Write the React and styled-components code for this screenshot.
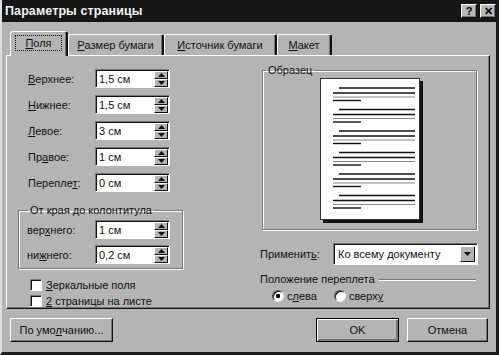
import React from 'react';
import styled, { createGlobalStyle } from 'styled-components';

const GlobalStyle = createGlobalStyle`
  html, body {
    margin: 0;
    padding: 0;
    background: #b4b4b4;
  }
  body {
    font-family: 'Liberation Sans', Arial, sans-serif;
    font-size: 11px;
    color: #111;
  }
`;

// underline one letter (keyboard accelerator)
const hot = (text, i) => (
  <>
    {text.slice(0, i)}
    <U>{text[i]}</U>
    {text.slice(i + 1)}
  </>
);

const tabs = [
  { label: 'Поля', key: 0, w: 58, active: true },
  { label: 'Размер бумаги', key: 0, w: 96 },
  { label: 'Источник бумаги', key: 0, w: 113 },
  { label: 'Макет', key: 0, w: 55 },
];

const margins = [
  { label: 'Верхнее:', key: 0, value: '1,5 см' },
  { label: 'Нижнее:', key: 0, value: '1,5 см' },
  { label: 'Левое:', key: 0, value: '3 см' },
  { label: 'Правое:', key: 2, value: '1 см' },
  { label: 'Переплет:', key: 7, value: '0 см' },
];

const headers = [
  { label: 'верхнего:', key: 3, value: '1 см' },
  { label: 'нижнего:', key: 2, value: '0,2 см' },
];

const pageGroups = [9, 30.5, 52, 73.5, 95, 116.5];

const SpinArrow = ({ down }) => (
  <svg width="7" height="4" viewBox="0 0 7 4">
    <path d={down ? 'M0 0H7L3.5 4Z' : 'M0 4H7L3.5 0Z'} fill="#111" />
  </svg>
);

const NumberField = ({ value }) => (
  <Field>
    <FieldText>{value}</FieldText>
    <Spin>
      <SpinButton>
        <SpinArrow />
      </SpinButton>
      <SpinButton>
        <SpinArrow down />
      </SpinButton>
    </Spin>
  </Field>
);

const PagePreview = () => (
  <Page>
    <svg width="98" height="140" viewBox="0 0 98 140">
      {pageGroups.map((y) => (
        <g key={y} stroke="#111" strokeWidth="1.4">
          <line x1="18" y1={y} x2="94" y2={y} />
          <line x1="12" y1={y + 5} x2="94" y2={y + 5} />
          <line x1="12" y1={y + 9} x2="94" y2={y + 9} stroke="#888" strokeWidth="1" />
          <line x1="12" y1={y + 12.5} x2="40" y2={y + 12.5} />
        </g>
      ))}
    </svg>
  </Page>
);

const App = () => (
  <>
    <GlobalStyle />
    <Window>
      <TitleBar>
        <Title>Параметры страницы</Title>
        <TitleButton>?</TitleButton>
        <TitleButton $gap>✕</TitleButton>
      </TitleBar>
      <Body>
        <TabRow>
          {tabs.map((t) => (
            <Tab key={t.label} $w={t.w} $active={t.active}>
              {t.active ? <Focus>{hot(t.label, t.key)}</Focus> : hot(t.label, t.key)}
            </Tab>
          ))}
        </TabRow>
        <Panel>
          <LeftColumn>
            {margins.map((m) => (
              <FieldRow key={m.label}>
                <span>{hot(m.label, m.key)}</span>
                <NumberField value={m.value} />
              </FieldRow>
            ))}
            <Group>
              <Legend>От края до колонтитула</Legend>
              {headers.map((h) => (
                <GroupRow key={h.label}>
                  <span>{hot(h.label, h.key)}</span>
                  <NumberField value={h.value} />
                </GroupRow>
              ))}
            </Group>
            <CheckRow $first>
              <CheckBox />
              <span>{hot('Зеркальные поля', 0)}</span>
            </CheckRow>
            <CheckRow>
              <CheckBox />
              <span>{hot('2 страницы на листе', 0)}</span>
            </CheckRow>
          </LeftColumn>
          <RightColumn>
            <SampleGroup>
              <SampleLegend>Образец</SampleLegend>
              <SampleBody>
                <PagePreview />
              </SampleBody>
            </SampleGroup>
            <ApplyRow>
              <ApplyLabel>{hot('Применить:', 8)}</ApplyLabel>
              <Combo>
                <ComboText>Ко всему документу</ComboText>
                <ComboButton>
                  <SpinArrow down />
                </ComboButton>
              </Combo>
            </ApplyRow>
            <BindingHeader>
              <span>Положение переплета</span>
              <EtchedLine />
            </BindingHeader>
            <RadioRow>
              <RadioItem>
                <Radio $checked />
                <span>{hot('слева', 1)}</span>
              </RadioItem>
              <RadioItem>
                <Radio />
                <span>{hot('сверху', 5)}</span>
              </RadioItem>
            </RadioRow>
          </RightColumn>
        </Panel>
        <Footer>
          <Button $w={103}>{hot('По умолчанию...', 6)}</Button>
          <Spacer />
          <DefaultButton>OK</DefaultButton>
          <Button $w={81}>Отмена</Button>
        </Footer>
      </Body>
    </Window>
  </>
);

const U = styled.span`
  text-decoration: underline;
  text-underline-offset: 1px;
`;

const Window = styled.div`
  width: 499px;
  height: 355px;
  box-sizing: border-box;
  background: #b4b4b4;
  border-left: 2px solid #dedede;
  border-right: 3px solid #1c1c1c;
  border-bottom: 3px solid #1c1c1c;
  display: flex;
  flex-direction: column;
  overflow: hidden;
`;

const TitleBar = styled.div`
  height: 22px;
  flex: none;
  background: #161616;
  display: flex;
  align-items: center;
  padding: 0 0 0 3px;
`;

const Title = styled.div`
  flex: 1;
  color: #f4f4f4;
  font-weight: bold;
  font-size: 12.5px;
  letter-spacing: 0.1px;
`;

const TitleButton = styled.div`
  width: 16px;
  height: 14px;
  box-sizing: border-box;
  margin-left: ${(p) => (p.$gap ? 3 : 0)}px;
  background: #b8b8b8;
  border: 1px solid;
  border-color: #fff #111 #111 #fff;
  box-shadow: inset -1px -1px #777;
  display: flex;
  align-items: center;
  justify-content: center;
  font-weight: bold;
  font-size: 11px;
  line-height: 1;
  color: #000;
`;

const Body = styled.div`
  flex: 1;
  display: flex;
  flex-direction: column;
  padding: 9px 6px 0 4px;
`;

const TabRow = styled.div`
  display: flex;
  align-items: flex-end;
  height: 25px;
  padding-left: 4px;
  margin-bottom: -1px;
  position: relative;
  z-index: 1;
`;

const Tab = styled.div`
  box-sizing: border-box;
  width: ${(p) => p.$w}px;
  height: ${(p) => (p.$active ? 25 : 21)}px;
  margin-bottom: ${(p) => (p.$active ? 0 : 1)}px;
  background: #b4b4b4;
  border-top: 1px solid #fff;
  border-left: 1px solid #fff;
  border-right: 2px solid #111;
  border-radius: 3px 3px 0 0;
  box-shadow: inset -1px 0 #777;
  display: flex;
  align-items: center;
  justify-content: center;
  padding-bottom: ${(p) => (p.$active ? 2 : 0)}px;
  white-space: nowrap;
`;

const Focus = styled.span`
  outline: 1px dotted #111;
  padding: 1px 9px;
  line-height: 12px;
`;

const Panel = styled.div`
  box-sizing: border-box;
  height: 254px;
  border-top: 1px solid #fff;
  border-left: 1px solid #fff;
  border-right: 1px solid #111;
  border-bottom: 1px solid #111;
  box-shadow: inset -1px -1px #777;
  display: flex;
  padding: 7px 0 0 11px;
`;

const LeftColumn = styled.div`
  width: 165px;
  margin-top: 6px;
  display: flex;
  flex-direction: column;
`;

const FieldRow = styled.div`
  display: grid;
  grid-template-columns: 67px 75px;
  align-items: center;
  height: 19px;
  margin-bottom: 7px;
  padding-left: 10px;
`;

const Field = styled.div`
  box-sizing: border-box;
  width: 75px;
  height: 19px;
  background: #fff;
  border: 1px solid;
  border-color: #777 #fff #fff #777;
  box-shadow: inset 1px 1px #111;
  display: flex;
  align-items: stretch;
  padding: 1px 1px 0 1px;
`;

const FieldText = styled.div`
  flex: 1;
  display: flex;
  align-items: center;
  padding-left: 2px;
  font-size: 11px;
`;

const Spin = styled.div`
  width: 14px;
  display: flex;
  flex-direction: column;
`;

const SpinButton = styled.div`
  flex: 1;
  box-sizing: border-box;
  background: #b4b4b4;
  border: 1px solid;
  border-color: #fff #111 #111 #fff;
  display: flex;
  align-items: center;
  justify-content: center;
`;

const Group = styled.fieldset`
  box-sizing: border-box;
  width: 165px;
  margin: 4px 0 0 0;
  padding: 3px 0 4px 8px;
  border: 1px solid #777;
  box-shadow: inset 1px 1px #fff, 1px 1px #fff;
`;

const Legend = styled.legend`
  padding: 0 2px;
  margin-left: 1px;
  line-height: 14px;
  font-size: 11px;
`;

const GroupRow = styled(FieldRow)`
  grid-template-columns: 68px 75px;
  padding-left: 0;
  margin-bottom: 0;
  & + & {
    margin-top: 6px;
  }
`;

const CheckRow = styled.div`
  display: flex;
  align-items: center;
  height: 16px;
  margin-top: ${(p) => (p.$first ? 9 : 2)}px;
  padding-left: 12px;
  gap: 4px;
`;

const CheckBox = styled.div`
  width: 12px;
  height: 12px;
  box-sizing: border-box;
  background: #fff;
  border: 1px solid;
  border-color: #777 #fff #fff #777;
  box-shadow: inset 1px 1px #111;
`;

const RightColumn = styled.div`
  width: 220px;
  margin-left: 77px;
  display: flex;
  flex-direction: column;
`;

const SampleGroup = styled.fieldset`
  box-sizing: border-box;
  width: 215px;
  height: 167px;
  margin: 0 0 0 2px;
  padding: 1px 0 0 0;
  border: 1px solid #777;
  box-shadow: inset 1px 1px #fff, 1px 1px #fff;
`;

const SampleLegend = styled(Legend)`
  margin-left: 3px;
`;

const SampleBody = styled.div`
  display: flex;
  justify-content: center;
`;

const Page = styled.div`
  width: 100px;
  height: 142px;
  box-sizing: border-box;
  background: #fff;
  border: 1px solid #333;
  box-shadow: 3px 3px 0 #111;
`;

const ApplyRow = styled.div`
  display: flex;
  align-items: center;
  margin-top: 13px;
`;

const ApplyLabel = styled.span`
  width: 73px;
`;

const Combo = styled(Field)`
  width: 145px;
  height: 22px;
  padding: 2px;
`;

const ComboText = styled(FieldText)`
  padding-left: 2px;
`;

const ComboButton = styled(SpinButton)`
  flex: none;
  width: 15px;
`;

const BindingHeader = styled.div`
  display: flex;
  align-items: center;
  height: 14px;
  margin-top: 7px;
`;

const EtchedLine = styled.div`
  flex: 1;
  margin: 1px 4px 0 4px;
  border-top: 1px solid #777;
  border-bottom: 1px solid #fff;
`;

const RadioRow = styled.div`
  display: flex;
  align-items: center;
  height: 16px;
  margin-top: 2px;
  padding-left: 12px;
  gap: 17px;
`;

const RadioItem = styled.div`
  display: flex;
  align-items: center;
  gap: 3px;
`;

const Radio = styled.div`
  width: 12px;
  height: 12px;
  box-sizing: border-box;
  border-radius: 50%;
  background: ${(p) =>
    p.$checked ? 'radial-gradient(circle, #111 0 2px, #fff 2.5px)' : '#fff'};
  border: 1px solid;
  border-color: #555 #eee #eee #555;
  box-shadow: inset 1px 1px #111;
`;

const Footer = styled.div`
  display: flex;
  margin-top: 9px;
  padding: 0 2px 0 4px;
`;

const Spacer = styled.div`
  flex: 1;
`;

const Button = styled.div`
  box-sizing: border-box;
  width: ${(p) => p.$w}px;
  height: 24px;
  background: #b4b4b4;
  border: 1px solid;
  border-color: #fff #111 #111 #fff;
  box-shadow: inset -1px -1px #777;
  display: flex;
  align-items: center;
  justify-content: center;
  white-space: nowrap;
`;

const DefaultButton = styled(Button)`
  width: 83px;
  margin-right: 8px;
  border: 1px solid #000;
  box-shadow: inset 1px 1px #fff, inset -2px -2px #777, inset -1px -1px #111;
`;

export default App;
